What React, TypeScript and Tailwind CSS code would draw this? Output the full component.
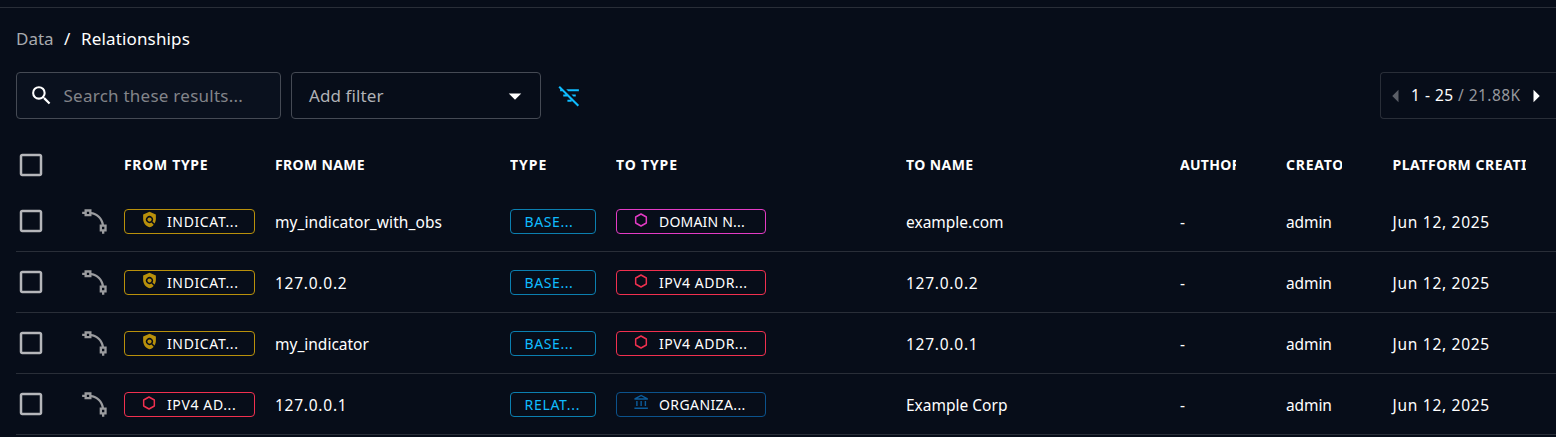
import React from "react";
import { MdSearch, MdPolicy, MdFilterListOff, MdArrowDropDown, MdCheckBoxOutlineBlank, MdArrowLeft, MdArrowRight, MdOutlineAccountBalance } from "react-icons/md";

type Kind = "indicator" | "domain" | "ip" | "org";

const chipStyle: Record<Kind, { border: string; icon: string }> = {
  indicator: { border: "border-[#b8900b]", icon: "text-[#b8900b]" },
  domain: { border: "border-[#e33bc5]", icon: "text-[#e33bc5]" },
  ip: { border: "border-[#f0304f]", icon: "text-[#f0304f]" },
  org: { border: "border-[#0b528c]", icon: "text-[#0c5c9c]" },
};

interface Row {
  from: Kind; fromLabel: string; fromSpacing: string; fromName: string; fromNameSpacing: string;
  type: string; typeSpacing: string;
  to: Kind; toLabel: string; toSpacing: string; toName: string; toNameSpacing: string;
}

const ipSpacing = "tracking-[0.75px]";
const plain = "tracking-[0]";

const rows: Row[] = [
  { from: "indicator", fromLabel: "INDICAT...", fromSpacing: "tracking-[0.62px]", fromName: "my_indicator_with_obs", fromNameSpacing: "tracking-[0.08px]", type: "BASE...", typeSpacing: "tracking-[0.6px]", to: "domain", toLabel: "DOMAIN N...", toSpacing: "tracking-[0.2px]", toName: "example.com", toNameSpacing: plain },
  { from: "indicator", fromLabel: "INDICAT...", fromSpacing: "tracking-[0.62px]", fromName: "127.0.0.2", fromNameSpacing: ipSpacing, type: "BASE...", typeSpacing: "tracking-[0.6px]", to: "ip", toLabel: "IPV4 ADDR...", toSpacing: "tracking-[0.5px]", toName: "127.0.0.2", toNameSpacing: ipSpacing },
  { from: "indicator", fromLabel: "INDICAT...", fromSpacing: "tracking-[0.62px]", fromName: "my_indicator", fromNameSpacing: plain, type: "BASE...", typeSpacing: "tracking-[0.6px]", to: "ip", toLabel: "IPV4 ADDR...", toSpacing: "tracking-[0.5px]", toName: "127.0.0.1", toNameSpacing: ipSpacing },
  { from: "ip", fromLabel: "IPV4 AD...", fromSpacing: "tracking-[0.62px]", fromName: "127.0.0.1", fromNameSpacing: ipSpacing, type: "RELAT...", typeSpacing: "tracking-[0.7px]", to: "org", toLabel: "ORGANIZA...", toSpacing: "tracking-[0.4px]", toName: "Example Corp", toNameSpacing: plain },
];

const grid = "grid grid-cols-[65px_43px_151px_235px_106px_290px_274px_106px_106.5px_163.5px] w-[1540px]";

function Hexagon() {
  return (
    <svg viewBox="0 0 24 24" className="size-4" fill="none" stroke="currentColor" strokeWidth="2.2" strokeLinejoin="round">
      <path d="M12 3l8 4.5v9L12 21l-8-4.5v-9z" />
    </svg>
  );
}

function VectorRadius() {
  return (
    <svg viewBox="0 0 24 24" className="size-7" fill="currentColor">
      <path d="M1,4V6H3V8H9V6.31C13.56,7.15 16.85,10.44 17.69,15H16V21H18V23H20V21H22V15H19.72C18.8,9.35 14.65,5.2 9,4.28V2H3V4M5,4H7V6H5M18,17H20V19H18" />
    </svg>
  );
}

function Chip({ kind, label, spacing, width }: { kind: Kind; label: string; spacing: string; width: string }) {
  const s = chipStyle[kind];
  return (
    <div className={`flex h-[25px] items-center rounded-[4px] border text-sm ${width} ${s.border}`}>
      <span className={`ml-4 mb-[3px] flex ${s.icon}`}>
        {kind === "indicator" ? <MdPolicy className="size-[17px]" /> : kind === "org" ? <MdOutlineAccountBalance className="size-[17px]" /> : <Hexagon />}
      </span>
      <span className={`whitespace-nowrap pt-0.5 ${kind === "indicator" || kind === "org" ? "ml-[9px]" : "ml-[10px]"} ${spacing}`}>{label}</span>
    </div>
  );
}

function Checkbox() {
  return <MdCheckBoxOutlineBlank className="size-[30px] text-[#b5b6ba]" />;
}

function Heading({ text, clip = "", spacing }: { text: string; clip?: string; spacing: string }) {
  return <div className={`overflow-hidden whitespace-nowrap ${clip}`}><span className={spacing}>{text}</span></div>;
}

export default function App() {
  return (
    <div className="h-[437px] w-[1556px] overflow-hidden bg-[#070d19] pt-[7px] font-['Noto_Sans',sans-serif] text-white">
      <div className="h-px bg-[#292e38]" />
      <nav className="ml-4 mt-[18px] flex h-[26px] items-center text-[17px]">
        <span className="w-[48px] text-[#a8aaae]">Data</span>
        <span className="w-[17px]">/</span>
        <span className="tracking-[0.15px]">Relationships</span>
      </nav>

      <div className="mt-5 flex h-[47px] items-center pl-4">
        <div className="flex h-[47px] w-[265px] items-center rounded-[4px] border border-[#454a54] bg-[#0a111e] pl-3">
          <MdSearch className="size-[25px]" />
          <span className="ml-[9.5px] whitespace-nowrap text-[17px] tracking-[0.25px] text-[#828489]">Search these results...</span>
        </div>
        <div className="ml-[10px] flex h-[47px] w-[250px] items-center justify-between rounded-[4px] border border-[#454a54] pl-[17px] pr-[10px]">
          <span className="text-[17px] tracking-[0.1px] text-[#b0b2b6]">Add filter</span>
          <MdArrowDropDown className="size-[30px]" />
        </div>
        <MdFilterListOff className="ml-4 size-[25px] text-[#0fbcff]" />
        <div className="ml-auto flex h-[47px] w-[176px] items-center rounded-l-[4px] border border-r-0 border-[#292e38]">
          <MdArrowLeft className="size-[30px] shrink-0 text-[#5b5f67]" />
          <span className="w-[47px] shrink-0 whitespace-nowrap text-[15.5px] tracking-[0.5px]">1 - 25</span>
          <span className="w-[63px] shrink-0 whitespace-nowrap text-[15.5px] tracking-[0.45px] text-[#96989d]">/ 21.88K</span>
          <MdArrowRight className="size-[30px] shrink-0" />
        </div>
      </div>

      <div className="ml-4">
        <div className={`${grid} h-[72px] items-center pt-5 text-sm font-bold`}>
          <Checkbox />
          <div />
          <Heading text="FROM TYPE" spacing="tracking-[0.67px]" />
          <Heading text="FROM NAME" spacing="tracking-[0.33px]" />
          <Heading text="TYPE" spacing="tracking-[1px]" />
          <Heading text="TO TYPE" spacing="tracking-[0.85px]" />
          <Heading text="TO NAME" spacing="tracking-[0.43px]" />
          <Heading text="AUTHOR" spacing="tracking-[0.3px]" clip="w-14" />
          <Heading text="CREATORS" spacing="tracking-[0.75px]" clip="w-14" />
          <Heading text="PLATFORM CREATION DATE" spacing="tracking-[0.55px]" clip="w-[133px]" />
        </div>
        {rows.map((r, i) => (
          <div key={i} className={`${grid} h-[61px] items-center border-b border-[#292e38] text-[15.5px]`}>
            <Checkbox />
            <span className="-ml-[0.5px] text-[#9b9c9f]"><VectorRadius /></span>
            <Chip kind={r.from} label={r.fromLabel} spacing={r.fromSpacing} width="w-[131px]" />
            <div className="pt-1"><span className={r.fromNameSpacing}>{r.fromName}</span></div>
            <div className="flex h-[25px] w-[86px] items-center rounded-[4px] border border-[#0b7fb0] pl-[13.5px] pt-0.5 text-sm text-[#0fbcff]"><span className={r.typeSpacing}>{r.type}</span></div>
            <Chip kind={r.to} label={r.toLabel} spacing={r.toSpacing} width="w-[150px]" />
            <div className="pt-1"><span className={r.toNameSpacing}>{r.toName}</span></div>
            <div className="pt-1">-</div>
            <div className="pt-1"><span className="tracking-[-0.1px]">admin</span></div>
            <div className="pt-1"><span className="tracking-[0.72px]">Jun 12, 2025</span></div>
          </div>
        ))}
      </div>
    </div>
  );
}
